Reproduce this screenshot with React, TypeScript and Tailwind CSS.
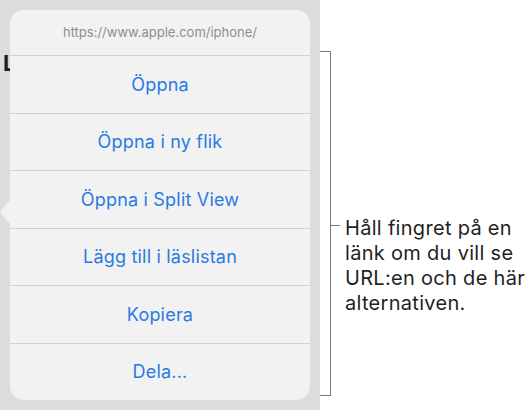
import React from 'react';

const actions = ['Öppna', 'Öppna i ny flik', 'Öppna i Split View', 'Lägg till i läslistan', 'Kopiera', 'Dela...'];

export default function App() {
  return (
    <div className="flex h-[410px] w-[530px] bg-white font-['Inter',sans-serif]">
      {/* background page, dimmed */}
      <div className="relative h-full w-[320px] bg-[#dcdcdc] px-[10px] py-[10px]">
        <span className="absolute left-[3px] top-[47px] text-[22px] font-bold text-[#1c1c1c]">L</span>
        <div className="relative flex h-[390px] w-[300px] flex-col rounded-[14px] bg-[#f2f2f2]">
          {/* popover arrow */}
          <div className="absolute left-[-10px] top-[190px] h-0 w-0 border-y-[12px] border-r-[10px] border-y-transparent border-r-[#f2f2f2]" />
          <div className="flex h-[45px] items-center justify-center text-[13px] text-[#8e8e8e]">
            https://www.apple.com/iphone/
          </div>
          {actions.map((a) => (
            <div
              key={a}
              className="flex flex-1 items-center justify-center border-t border-[#d2d2d2] text-[18px] tracking-[0.2px] text-[#2a7ae4]"
            >
              {a}
            </div>
          ))}
        </div>
      </div>

      {/* callout */}
      <div className="flex flex-1 items-stretch pt-[51px] pb-[14px]">
        <div className="relative h-[345px] w-[11px] border-y border-r border-[#7a7a7a]">
          <div className="absolute left-[10px] top-[173px] h-px w-[10px] bg-[#7a7a7a]" />
        </div>
        <div className="ml-[14px] mt-[165px] whitespace-nowrap text-[20px] leading-[25px] tracking-[0.3px] text-[#1f1f1f]">
          Håll fingret på en
          <br />
          länk om du vill se
          <br />
          URL:en och de här
          <br />
          alternativen.
        </div>
      </div>
    </div>
  );
}
